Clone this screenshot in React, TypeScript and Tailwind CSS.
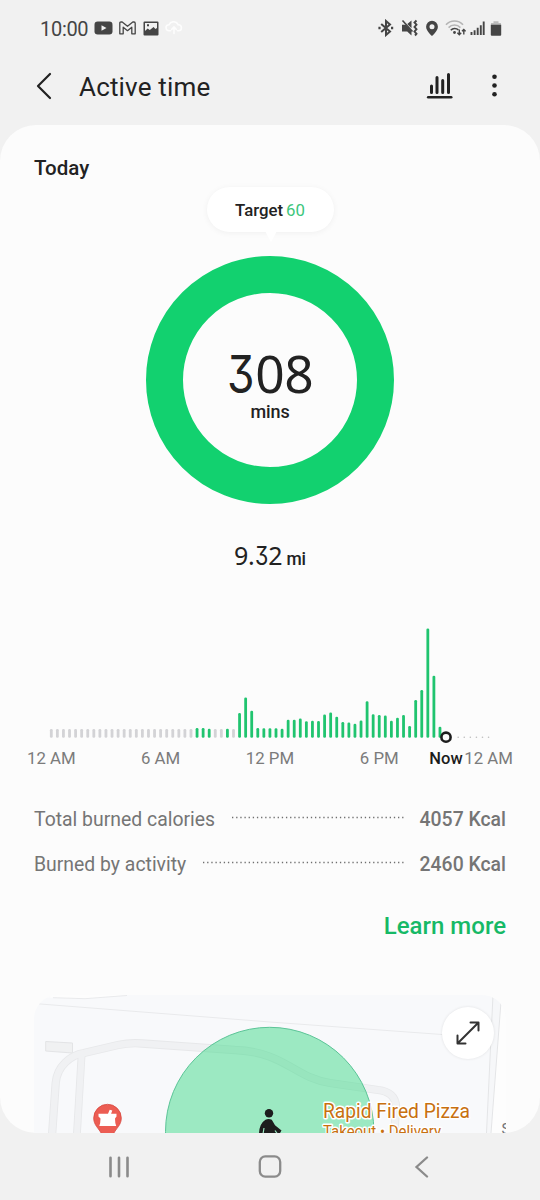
import { ReactNode } from 'react';

const SLOT = 6.073;
const FIRST_X = 51.3;
const BASELINE = 137.7;

const ACTIVITY = [
  0, 0, 0, 0, 0, 0, 0, 0, 0, 0, 0, 0, 0, 0, 0, 0, 0, 0, 0, 0, 0, 0, 0, 0,
  9.8, 9.8, 9, 0, 0, 9, 0, 24.7, 40.3, 27, 9.8, 9.4,
  9.4, 9.4, 9, 18, 18, 19.3, 16.5, 17, 16.8, 23.3, 25.3, 21,
  15.7, 15.3, 14, 17.3, 36.5, 23.5, 22.7, 22.3, 17, 20, 22.7, 11.7,
  37.7, 47.7, 109.3, 62, 11,
];

const AXIS_LABELS = [
  { text: '12 AM', slot: 0 },
  { text: '6 AM', slot: 18 },
  { text: '12 PM', slot: 36 },
  { text: '6 PM', slot: 54 },
  { text: '12 AM', slot: 72 },
];

function StatusBar() {
  return (
    <div className="flex h-14 items-center justify-between pl-10 pr-[38px] text-[#454545]">
      <div className="flex items-center">
        <span className="w-12 whitespace-nowrap pt-[2px] text-[20px] leading-none tracking-[-0.3px]">10:00</span>
        <svg className="ml-[6px]" width="19" height="14" viewBox="0 0 19 14">
          <rect x="0.5" y="0.5" width="18" height="13" rx="3.2" fill="currentColor" />
          <path d="M7.5 4.2v5.6l5-2.8z" fill="#f1f1f1" />
        </svg>
        <svg className="ml-[6px]" width="17" height="14" viewBox="0 0 17 14" fill="none" stroke="currentColor" strokeWidth="1.3" strokeLinejoin="round">
          <path d="M.8 2.2Q.8 1 2 1h1.2l5.3 4.3L13.8 1H15q1.2 0 1.2 1.2v10.6h-3.4V6.2L8.5 9.7 4.2 6.2v6.6H.8z" />
        </svg>
        <svg className="ml-[7px]" width="16" height="15" viewBox="0 0 16 15">
          <path fillRule="evenodd" d="M1.5.5h13q1 0 1 1v12q0 1-1 1h-13q-1 0-1-1v-12q0-1 1-1zM2 2v8l2.600-2.500 2.200 1.600L10.600 6l1.800 2L14 7V2zM4 3.200h2v2H4z" fill="currentColor" />
        </svg>
        <svg className="ml-[6px]" width="18" height="14" viewBox="0 0 18 14" fill="none" stroke="#fdfdfd" strokeWidth="1.600" strokeLinecap="round">
          <path d="M5.500 9.800H4a3 3 0 0 1 0-6 5 5 0 0 1 9.200 0 3 3 0 0 1 .4 6h-1.100M9 12.500V6.500M6.800 8.300 9 6l2.200 2.300" />
        </svg>
      </div>
      <div className="flex items-center">
        <svg width="16" height="18" viewBox="0 0 16 18" fill="none" stroke="currentColor" strokeWidth="2">
          <path d="M3.200 5 12 12.600l-4 3.400V2l4 3.400L3.200 13" />
          <path d="M.4 9h2.200M13 9h2.200" strokeWidth="2.400" />
        </svg>
        <svg className="ml-[7px]" width="18" height="18" viewBox="0 0 18 18">
          <path d="M1 5.800h3.700L10.500 12v4.500l-4.300-4H1zM6.300 5 10.500 1.600v7.600z" fill="currentColor" />
          <path d="m1.500 1.500 10 11" stroke="currentColor" strokeWidth="1.600" />
          <path d="m15.500 1.500-2 2 2 2.200-2 2.300 2 2.200-2 2.300 2 2.300-1.500 1.700" fill="none" stroke="currentColor" strokeWidth="1.900" />
        </svg>
        <svg className="ml-[6px]" width="14" height="17" viewBox="0 0 14 17">
          <path fillRule="evenodd" d="M7 .8A5.900 5.900 0 0 0 1.100 6.700C1.100 11 7 16 7 16s5.900-5 5.900-9.300A5.900 5.900 0 0 0 7 .8zM7 4.200a2.500 2.500 0 1 1 0 5 2.500 2.500 0 0 1 0-5z" fill="currentColor" />
        </svg>
        <svg className="ml-[6px]" width="21" height="18" viewBox="0 0 21 18" fill="none" strokeWidth="1.600">
          <path d="M1 5.800a11.500 11.500 0 0 1 17 0M3.600 8.600a8 8 0 0 1 11.800 0" stroke="#b4b4b4" />
          <path d="M5.800 11.300a5.500 5.500 0 0 1 7.600-.4" stroke="currentColor" />
          <circle cx="9.500" cy="13.500" r="1.400" fill="currentColor" />
          <path d="M14.300 10.500v5M12.400 13.700l1.900 2 1.900-2M18.800 15.500v-5M17 12.300l1.800-1.900 1.800 1.900" stroke="currentColor" strokeWidth="1.400" />
        </svg>
        <svg className="ml-[4px]" width="15" height="16" viewBox="0 0 15 16" stroke="currentColor" strokeWidth="1.900">
          <path d="M1.500 15v-3M4.600 15v-4.700M7.700 15V7.800M10.800 15V5.200M13.700 15V1.500" />
        </svg>
        <svg className="ml-[5px]" width="12" height="17" viewBox="0 0 12 17">
          <path d="M1 3h2.500V1.200h5V3H11v3H1z" fill="#bcbcbc" />
          <path d="M.8 4.800h10.400v10q0 1-1 1H1.800q-1 0-1-1z" fill="currentColor" />
        </svg>
      </div>
    </div>
  );
}

function Header() {
  return (
    <header className="flex h-[69px] items-start pl-[34px] pr-10 pt-3 text-[#222]">
      <button className="flex h-9 w-[45px] items-center" aria-label="Back">
        <svg width="20" height="28" viewBox="0 0 20 28" fill="none" stroke="currentColor" strokeWidth="2.200" strokeLinecap="round" strokeLinejoin="round">
          <path d="M16 2 4 14l12 12" />
        </svg>
      </button>
      <h1 className="flex-1 pt-[1px] text-[26px] leading-9 tracking-[0.170px]">Active time</h1>
      <button aria-label="Trends" className="mt-px">
        <svg width="27" height="30" viewBox="0 0 27 30" fill="none" stroke="currentColor" strokeLinecap="round">
          <path d="M5.500 17v6.500M11 8.500v15M16.700 11.500v12M22.500 5.500v18" strokeWidth="3" />
          <path d="M2.200 28.300h23" strokeWidth="2.600" />
        </svg>
      </button>
      <button aria-label="More" className="ml-9 mt-1">
        <svg width="11" height="28" viewBox="0 0 11 28" fill="currentColor">
          <circle cx="5.500" cy="4.700" r="2.300" />
          <circle cx="5.500" cy="13.500" r="2.300" />
          <circle cx="5.500" cy="22.300" r="2.300" />
        </svg>
      </button>
    </header>
  );
}

// Number set in humanist figures with a flat-topped three
function Figures({ value }: { value: string }) {
  return (
    <>
      {value.split('').map((ch, i) =>
        ch === '3' ? (
          <span key={i} className="inline-block w-[0.55em] font-['Inter',sans-serif] leading-none [font-feature-settings:'cv09']">
            <span className="inline-block origin-left scale-x-[0.86]">3</span>
          </span>
        ) : (
          <span key={i}>{ch}</span>
        )
      )}
    </>
  );
}

function TargetBubble() {
  return (
    <div className="relative flex h-[45px] w-[127px] items-center justify-center gap-[3px] rounded-full bg-white pt-[3px] text-[16.800px] shadow-[0_1px_6px_rgba(0,0,0,0.05)]">
      <span className="font-medium text-[#222]">Target</span>
      <span className="text-[#3cc67c]">60</span>
      <svg className="absolute left-[58px] top-[44px]" width="12" height="12" viewBox="0 0 12 12">
        <path d="M0 0h12L6 11z" fill="#fff" />
      </svg>
    </div>
  );
}

function ProgressRing() {
  return (
    <div className="mt-6 flex h-[248px] w-[248px] flex-col items-center rounded-full border-[37px] border-[#12d16f] pt-[53px] text-[#222]">
      <div className="h-[54px] whitespace-nowrap font-['Noto_Sans',sans-serif] text-[51.500px] leading-[54px] tracking-[-0.6px]">
        <Figures value="308" />
      </div>
      <div className="text-[18px] font-medium leading-6 tracking-[-0.1px]">mins</div>
    </div>
  );
}

function ActivityChart() {
  const slotX = (slot: number) => FIRST_X + slot * SLOT;

  return (
    <svg width="540" height="175" viewBox="0 0 540 175" className="block">
      {ACTIVITY.map((h, i) => {
        const height = h || 8.7;
        return (
          <rect
            key={i}
            x={slotX(i) - 1.4}
            y={BASELINE - height}
            width="2.8"
            height={height}
            rx="1.3"
            fill={h ? '#20c46f' : '#d3d3d6'}
          />
        );
      })}
      {[67, 68, 69, 70, 71, 72].map((slot) => (
        <circle key={slot} cx={slotX(slot)} cy="137.3" r="0.8" fill="#bdbdbd" />
      ))}
      <circle cx="446" cy="137.200" r="4.600" fill="#fcfcfc" stroke="#1c1c1c" strokeWidth="2.600" />
      <g fontSize="16.800" textAnchor="middle" fill="#7b7b7b">
        {AXIS_LABELS.map((label) => (
          <text key={label.slot} x={slotX(label.slot)} y="164">
            {label.text}
          </text>
        ))}
        <text x="446" y="164.400" fontSize="16.500" fill="#1c1c1c" fontWeight="500">
          Now
        </text>
      </g>
    </svg>
  );
}

function CalorieRow({ label, value }: { label: string; value: string }) {
  return (
    <div className="flex h-[45px] items-center text-[19.400px] text-[#757575]">
      <span>{label}</span>
      <svg className="ml-4 mr-[14px] h-[3px] min-w-0 flex-1 -translate-y-[2px]">
        <line x1="1" y1="1.500" x2="100%" y2="1.500" stroke="#6f6f6f" strokeWidth="1.300" strokeDasharray="1.300 2.850" />
      </svg>
      <span className="font-medium">{value}</span>
    </div>
  );
}

function MapLabel({ children, x, y, size, length }: { children: ReactNode; x: number; y: number; size: number; length: number }) {
  return (
    <text x={x} y={y} fontSize={size} textLength={length} lengthAdjust="spacingAndGlyphs" fill="#c8700f" stroke="#fff" strokeWidth="3" strokeLinejoin="round" paintOrder="stroke">
      {children}
    </text>
  );
}

function MapPreview() {
  const road = 'M51.700 1140 55.700 1083C57 1066 71 1055 84 1053L118 1045Q130 1042.500 142 1043.500L235 1050C285 1052 295 1078 330 1083L378 1090Q395 1092 396 1106L394 1140';

  return (
    <div className="relative mx-[34px] h-[138px] overflow-hidden rounded-t-[24px] bg-[#f8f9fb]">
      <svg width="472" height="138" viewBox="34 995 472 138" fill="none">
        <path d="M34 995h93l-42 3.700-32-1L34 996z" fill="#fdfdfd" />
        <path d="M53 997.700 85 998.700 127 995.500M34 1003.500 270 1022l172 12.500" stroke="#e9eaec" />
        <path d="m492.700 995-6 138H491l10-138z" fill="#f6f7f9" />
        <path d="M501.500 995 491 1133h15V995z" fill="#fdfdfd" />
        <path d="m493 995-6.500 138M501.500 995 491 1133" stroke="#e4e5e7" />
        <path d="M45.700 1041.500 72.500 1043v10L45.700 1051z" fill="#f0f1f2" stroke="#e3e4e6" />
        <path d={road} stroke="#e7e8ea" strokeWidth="8.300" />
        <path d="m81.700 1053-5 85" stroke="#e7e8ea" strokeWidth="7.800" />
        <path d={road} stroke="#f0f1f3" strokeWidth="6.500" />
        <path d="m81.900 1051-5.200 87" stroke="#f0f1f3" strokeWidth="6" />
        <circle cx="269.700" cy="1131.500" r="104.200" fill="#3fd98a" fillOpacity="0.5" stroke="#5cc497" />
        {/* Pharmacy pin */}
        <path d="M107.500 1104.300a13.800 13.800 0 0 0-13.800 13.800c0 7 5 10 8 16h11.600c3-6 8-9 8-16a13.800 13.800 0 0 0-13.800-13.800z" fill="#ec5d53" stroke="#d8483f" strokeWidth="0.800" />
        <path d="M98.500 1113.800h9.500l1.700-4 2.600.8-1.200 3.200h5.400v2.700l-1.500 2q0 4.500 1.200 7.500H99.300q1.200-3 1.200-7.500l-2-2z" fill="#fff" />
        {/* Walker */}
        <g fill="#1d1d1d">
          <circle cx="269" cy="1113.200" r="4.200" />
          <path d="M265.500 1119.700q3-1.500 6.300 0l3.200 5.600 6.500 5.200-2 3.500H259q.2-10.500 6.500-14.300z" />
        </g>
        <path d="m264 1128-1 6M275 1130.500l2.500 3.500" stroke="#9be8c1" strokeWidth="1.200" />
        <MapLabel x={323} y={1117.700} size={20} length={147}>Rapid Fired Pizza</MapLabel>
        <MapLabel x={323} y={1137} size={17} length={118}>Takeout • Delivery</MapLabel>
        <text x="501.500" y="1133.500" fontSize="15" fill="#737579">S</text>
      </svg>
      <button aria-label="Expand map" className="absolute left-[408px] top-[12px] flex h-[52px] w-[52px] items-center justify-center rounded-full bg-white text-[#333] shadow-[0_0_3px_rgba(0,0,0,0.1)]">
        <svg width="24" height="24" viewBox="0 0 24 24" fill="none" stroke="currentColor" strokeWidth="2" strokeLinecap="round" strokeLinejoin="round">
          <path d="M2 22 22 2M14.500 1.500H22.500V9.500M1.500 14.500V22.500H9.500" />
        </svg>
      </button>
    </div>
  );
}

function NavBar() {
  return (
    <nav className="flex flex-1 items-center text-[#8b8b8b]">
      <svg className="ml-[107px]" width="24" height="22" viewBox="0 0 24 22" stroke="currentColor" strokeWidth="2.600" strokeLinecap="round">
        <path d="M3.500 1.700v18.600M12 1.700v18.600M20.500 1.700v18.600" />
      </svg>
      <svg className="ml-[127px]" width="24" height="23" viewBox="0 0 24 23" fill="none" stroke="currentColor" strokeWidth="2.300">
        <rect x="1.800" y="1.400" width="20.400" height="20.200" rx="5.500" />
      </svg>
      <svg className="ml-[132px]" width="15" height="22" viewBox="0 0 15 22" fill="none" stroke="currentColor" strokeWidth="2.300" strokeLinecap="round">
        <path d="M13 1.500 2.500 11 13 20.500" />
      </svg>
    </nav>
  );
}

export default function App() {
  return (
    <div className="flex h-[1200px] w-[540px] flex-col overflow-hidden bg-[#f1f1f1] font-['Roboto',sans-serif]">
      <StatusBar />
      <Header />

      <main className="h-[1008px] shrink-0 overflow-hidden rounded-[36px] bg-[#fcfcfc]">
        <h2 className="h-[62px] px-[34px] pt-[30px] text-[20.500px] font-medium leading-[26px] text-[#222]">Today</h2>

        <section className="flex flex-col items-center">
          <TargetBubble />
          <ProgressRing />
          <div className="mt-[31px] flex h-10 items-baseline gap-1 text-[#222]">
            <span className="font-['Noto_Sans',sans-serif] text-[25px] leading-10 tracking-[-0.2px]">
              <Figures value="9.32" />
            </span>
            <span className="text-[17.500px] font-medium">mi</span>
          </div>
        </section>

        <section className="mt-[25px]">
          <ActivityChart />
        </section>

        <section className="mt-[22px] px-[34px]">
          <CalorieRow label="Total burned calories" value="4057 Kcal" />
          <CalorieRow label="Burned by activity" value="2460 Kcal" />
          <div className="mt-[23px] flex h-[85px] justify-end">
            <a className="text-[24px] font-medium leading-8 text-[#16b966]">Learn more</a>
          </div>
        </section>

        <MapPreview />
      </main>

      <NavBar />
    </div>
  );
}
